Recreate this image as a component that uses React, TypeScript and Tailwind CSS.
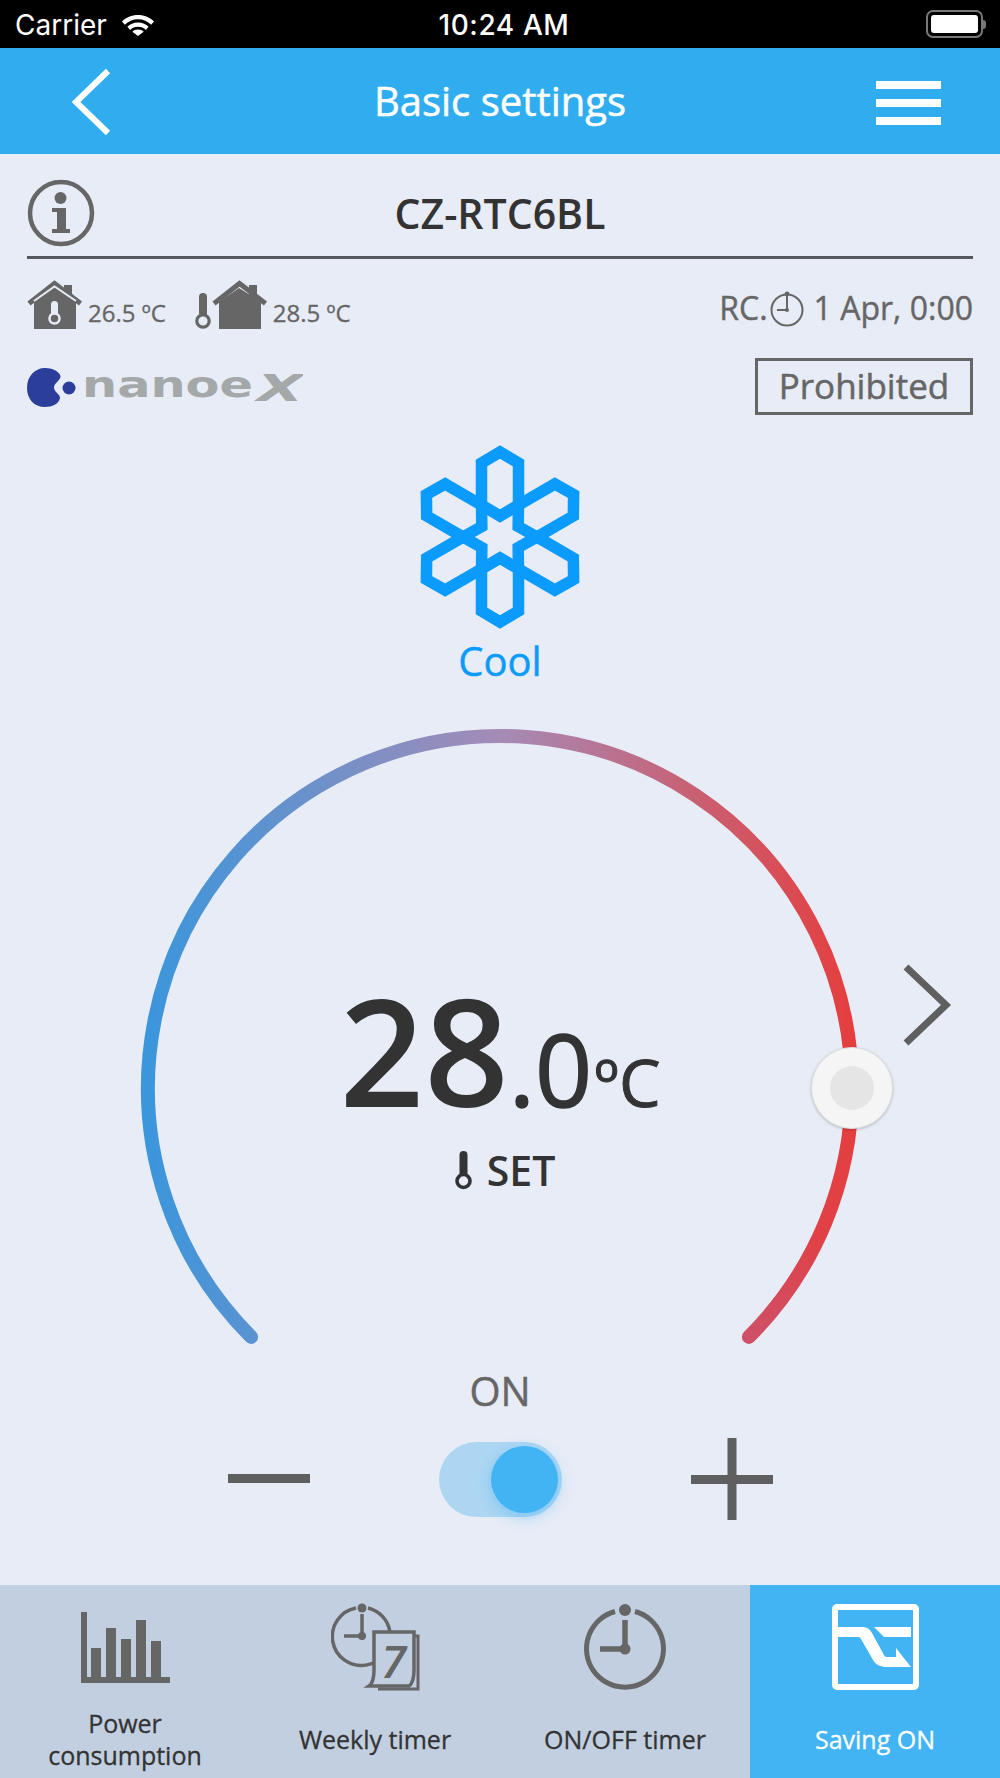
import { useState } from 'react';

const Thermometer = ({ className }: { className?: string }) => (
  <svg viewBox="0 0 17 39" className={className}>
    <rect x="4.500" y="0" width="8" height="28" rx="4" fill="currentColor" />
    <circle cx="8.500" cy="30" r="6.500" fill="#e7ecf6" stroke="currentColor" strokeWidth="3.600" />
  </svg>
);

const HouseTemp = () => (
  <svg viewBox="27 280 56 50" className="w-[56px] h-[50px] text-[#666]">
    <path d="M64 285h8v14h-8z" fill="currentColor" />
    <path d="M34 302 L54 285 L76 302 V329 H34 Z" fill="currentColor" />
    <path d="M29 303.500 L54.500 283.500 L80.500 303.500" fill="none" stroke="currentColor" strokeWidth="5" />
    <path d="M34 301 L54.500 286.500 L76 301" fill="none" stroke="#e7ecf6" strokeWidth="2" />
    <rect x="51" y="301" width="7" height="16" rx="3.500" fill="#e7ecf6" />
    <circle cx="54.500" cy="318.500" r="5" fill="#666" stroke="#e7ecf6" strokeWidth="2.500" />
  </svg>
);

const HouseOutside = () => (
  <svg viewBox="195 280 74 50" className="w-[74px] h-[50px] text-[#666]">
    <rect x="199" y="293" width="8" height="24" rx="4" fill="currentColor" />
    <circle cx="203" cy="321" r="6.200" fill="#e7ecf6" stroke="currentColor" strokeWidth="3.200" />
    <path d="M249 285h8v14h-8z" fill="currentColor" />
    <path d="M219 302 L239 288 L261 302 V329 H219 Z" fill="currentColor" />
    <path d="M214 303.500 L239.500 283.500 L265.500 303.500" fill="none" stroke="currentColor" strokeWidth="5" />
  </svg>
);

const NanoeLogo = () => (
  <svg viewBox="27 350 276 60" className="w-[276px] h-[60px]">
    <path
      d="M45 367 C54 367 61 372 60.500 376 C59 381 54 382 54 386.500 C54 391 60 393 60 397 C59 403 52 406 45 406 C34 406 27 398 27 387 C27 375 35 367 45 367 Z"
      fill="#2b3f9a"
    />
    <circle cx="69" cy="387" r="6.500" fill="#2b3f9a" />
    <text x="82" y="396" fontFamily="'DejaVu Sans', sans-serif" fontWeight="700" fontSize="36" textLength="171" lengthAdjust="spacingAndGlyphs" fill="#a5a8a8">
      nanoe
    </text>
    <text x="257" y="400" fontFamily="'DejaVu Sans', sans-serif" fontWeight="700" fontStyle="italic" fontSize="37" textLength="46" lengthAdjust="spacingAndGlyphs" fill="#a5a8a8">
      X
    </text>
  </svg>
);

// six elongated hexagon petals turned around the middle
const Snowflake = () => (
  <svg viewBox="-92 -93 184 186" className="w-[184px] h-[186px] text-[#0a9bfd]">
    {[0, 60, 120, 180, 240, 300].map((deg) => (
      <polygon
        key={deg}
        points="0,-85 18.500,-74 18.500,-32 0,-21 -18.500,-32 -18.500,-74"
        fill="none"
        stroke="currentColor"
        strokeWidth="11.500"
        transform={`rotate(${deg})`}
      />
    ))}
  </svg>
);

const Dial = () => (
  <svg viewBox="0 0 740 640" className="absolute left-[130px] top-0 w-[740px] h-[640px]">
    <defs>
      <linearGradient id="dialUpper" gradientUnits="userSpaceOnUse" x1="18" y1="0" x2="722" y2="0">
        <stop offset="0" stopColor="#3b96dc" />
        <stop offset="0.5" stopColor="#a58bb6" />
        <stop offset="1" stopColor="#e53e3e" />
      </linearGradient>
      <linearGradient id="dialLower" gradientUnits="userSpaceOnUse" x1="0" y1="367" x2="0" y2="616">
        <stop offset="0" stopColor="#e53e3e" />
        <stop offset="0.6" stopColor="#e04146" />
        <stop offset="1" stopColor="#cf5068" />
      </linearGradient>
    </defs>
    <path d="M121.100 615.900 A352 352 0 1 1 722 367" fill="none" stroke="url(#dialUpper)" strokeWidth="14" strokeLinecap="round" />
    <path d="M722 367 A352 352 0 0 1 618.900 615.900" fill="none" stroke="url(#dialLower)" strokeWidth="14" strokeLinecap="round" />
  </svg>
);

const TabLabel = ({ children, active }: { children: React.ReactNode; active?: boolean }) => (
  <div className={`flex-1 flex items-center justify-center text-center text-[25px] leading-[32px] [-webkit-text-stroke:0.3px] ${active ? 'text-white' : 'text-[#333]'}`}>
    {children}
  </div>
);

export default function App() {
  const [on, setOn] = useState(true);

  return (
    <div className="w-[1000px] h-[1778px] flex flex-col bg-[#e7ecf6] font-['Open_Sans',sans-serif] overflow-hidden">
      {/* status bar */}
      <div className="h-12 bg-black flex items-center justify-between pl-[15px] pr-[14px] relative text-white font-['Inter',sans-serif] text-[28px]">
        <div className="flex items-center gap-[14px]">
          <span className="pt-[2px]">Carrier</span>
          <svg viewBox="0 0 34 24" className="w-[34px] h-[24px]" fill="white">
            <path d="M17 3C10.500 3 5 5.500 1 9.500l2.800 3.300C7.300 9.300 11.800 7.300 17 7.300s9.700 2 13.200 5.500L33 9.500C29 5.500 23.500 3 17 3z" />
            <path d="M17 10.500c-4.500 0-8 1.700-10.600 4.200l2.800 3.200c2-2 4.700-3.200 7.800-3.200s5.800 1.200 7.800 3.200l2.800-3.200C25 12.200 21.500 10.500 17 10.500z" />
            <path d="M17 17.500c-2.400 0-4.300.9-5.700 2.200L17 24l5.700-4.300c-1.400-1.300-3.300-2.200-5.700-2.200z" />
          </svg>
        </div>
        <span className="absolute left-[8px] right-0 text-center font-medium tracking-[0.6px] pt-[2px]">10:24 AM</span>
        <div className="flex items-center">
          <div className="w-[57px] h-[28px] rounded-[7px] border-2 border-[#777] p-[3px]">
            <div className="w-full h-full rounded-[3px] bg-white" />
          </div>
          <div className="w-[3px] h-[9px] rounded-r-sm bg-[#777]" />
        </div>
      </div>

      {/* header */}
      <header className="h-[106px] bg-[#30adee] flex items-center justify-between relative pl-[70px] pr-[59px]">
        <button onClick={() => setOn(on)}>
          <svg viewBox="0 0 42 68" className="w-[42px] h-[68px] translate-y-[1px]">
            <polyline points="38,3 6,34 38,65" fill="none" stroke="white" strokeWidth="6" />
          </svg>
        </button>
        <h1 className="absolute left-0 right-0 text-center text-white text-[40px] [-webkit-text-stroke:0.5px] pointer-events-none">Basic settings</h1>
        <div className="flex flex-col gap-[10px] mt-[4px]">
          <div className="w-[65px] h-2 bg-white" />
          <div className="w-[65px] h-2 bg-white" />
          <div className="w-[65px] h-2 bg-white" />
        </div>
      </header>

      <main className="flex-1 flex flex-col relative">
        <div className="mx-[27px] h-[105px] border-b-[3px] border-[#55585c] flex items-center justify-center relative">
          <svg viewBox="0 0 68 68" className="absolute left-0 top-[25px] w-[68px] h-[68px] text-[#666]">
            <circle cx="34" cy="34" r="31" fill="none" stroke="currentColor" strokeWidth="4.500" />
            <circle cx="33.500" cy="19" r="6" fill="currentColor" />
            <path d="M25 29 H39 V50 H43 V54 H25 V50 H30 V33 H25 Z" fill="currentColor" />
          </svg>
          <h2 className="text-[41px] font-semibold text-[#333] pt-[18px]">CZ-RTC6BL</h2>
        </div>

        <div className="mx-[27px] mt-[21px] flex justify-between">
          <div className="flex flex-col">
            <div className="flex items-end h-[50px] text-[#666] text-[24px] [-webkit-text-stroke:0.3px]">
              <HouseTemp />
              <span className="ml-[5px] leading-[30px] mb-[2px]">26.5 ºC</span>
              <div className="ml-[29px]">
                <HouseOutside />
              </div>
              <span className="ml-[4px] leading-[30px] mb-[2px]">28.5 ºC</span>
            </div>
            <div className="mt-[21px]">
              <NanoeLogo />
            </div>
          </div>
          <div className="flex flex-col items-end text-[#666]">
            <div className="flex items-center h-[50px] text-[32px] [-webkit-text-stroke:0.4px] pt-[6px]">
              <span>RC.</span>
              <svg viewBox="0 0 34 36" className="w-[34px] h-[36px] ml-[2px] mr-[10px] mt-[2px]">
                <circle cx="17" cy="19" r="15.500" fill="none" stroke="#666" strokeWidth="2" />
                <circle cx="17" cy="3" r="2.400" fill="#666" />
                <path d="M17 5V19H7" fill="none" stroke="#666" strokeWidth="2" />
                <circle cx="17" cy="19" r="2" fill="#666" />
              </svg>
              <span>1 Apr, 0:00</span>
            </div>
            <div className="mt-[28px] w-[218px] h-[57px] border-[3px] border-[#666] flex items-center justify-center text-[35px] [-webkit-text-stroke:0.5px]">
              Prohibited
            </div>
          </div>
        </div>

        <div className="flex flex-col items-center mt-[29px]">
          <Snowflake />
          <span className="text-[40px] [-webkit-text-stroke:0.4px] text-[#0a9bfd] leading-[48px] mt-[7px]">Cool</span>
        </div>

        {/* temperature dial */}
        <section className="relative h-[640px] mt-[36px] flex flex-col items-center">
          <Dial />
          <div className="relative flex items-baseline text-[#333] leading-none mt-[255px]">
            <span className="text-[148px] font-semibold leading-none">28</span>
            <span className="text-[100px] [-webkit-text-stroke:1.5px] leading-none">.0</span>
            <span className="text-[66px] [-webkit-text-stroke:1px] leading-none ml-[2px]">ºC</span>
          </div>
          <div className="relative flex items-center text-[#333] text-[41px] font-semibold leading-none mt-[26px] ml-[10px]">
            <Thermometer className="w-[17px] h-[39px] mr-[15px]" />
            SET
          </div>
          {/* thumb sits on the arc */}
          <div className="absolute left-[811px] top-[326px] w-[82px] h-[82px] rounded-full bg-[#f5f5f5] border border-[#dcdcdc] shadow-[0_1px_3px_rgba(0,0,0,0.2)] flex items-center justify-center">
            <div className="w-[44px] h-[44px] rounded-full bg-[#e5e5e5]" />
          </div>
          <svg viewBox="0 0 50 82" className="absolute left-[902px] top-[243px] w-[50px] h-[82px]">
            <polyline points="4,3 44,41 4,79" fill="none" stroke="#5f5f5f" strokeWidth="7" />
          </svg>
        </section>

        <div className="flex flex-col items-center mt-[4px]">
          <span className="text-[40px] [-webkit-text-stroke:0.4px] text-[#666] leading-[52px]">ON</span>
          <div className="w-[545px] flex items-center justify-between mt-[21px]">
            <div className="w-[82px] h-[9px] bg-[#5f5f5f] -mt-[1px]" />
            <button onClick={() => setOn(!on)} className="w-[123px] h-[75px] rounded-full bg-[#add6f3] flex items-center justify-end pr-[4px]">
              <div className="w-[67px] h-[67px] rounded-full bg-[#42b4f4] shadow-[0_4px_14px_rgba(66,180,244,0.45)]" />
            </button>
            <svg viewBox="0 0 82 82" className="w-[82px] h-[82px]">
              <path d="M0 37h82v9H0zM36.500 0h9v82h-9z" fill="#5f5f5f" />
            </svg>
          </div>
        </div>
      </main>

      {/* bottom tabs */}
      <nav className="h-[193px] grid grid-cols-4 bg-[#c2cfe0]">
        <div className="flex flex-col items-center">
          <div className="h-[115px]">
            <svg viewBox="81 1612 89 71" className="w-[89px] h-[71px] mt-[27px]" fill="#666">
              <path d="M81 1612h6v65h83v6H81z" />
              <path d="M91 1648h10v30H91zM106 1628h10v50h-10zM121 1639h10v39h-10zM136 1620h10v58h-10zM151 1641h10v37h-10z" />
            </svg>
          </div>
          <TabLabel>
            <span>
              Power
              <br />
              consumption
            </span>
          </TabLabel>
        </div>
        <div className="flex flex-col items-center">
          <div className="h-[115px]">
            <svg viewBox="330 1602 90 90" className="w-[90px] h-[90px] mt-[17px] ml-[1px]" fill="none" stroke="#666">
              <path d="M355 1608 A29 29 0 1 0 389 1632 M367 1608 A29 29 0 0 1 389 1632" strokeWidth="3.500" />
              <circle cx="361" cy="1608" r="4.500" fill="#666" stroke="none" />
              <path d="M361 1614V1636H343" strokeWidth="3.500" />
              <circle cx="361" cy="1636" r="4" fill="#666" stroke="none" />
              <path d="M413 1636 H417 V1689 H377" strokeWidth="3" />
              <path d="M373 1632 H413 V1670 C413 1678 411 1684 408 1686 H368 C371 1684 373 1678 373 1670 Z" fill="#c2cfe0" strokeWidth="3.500" />
              <text x="380" y="1678" fontFamily="'Open Sans', sans-serif" fontSize="46" fontStyle="italic" fontWeight="600" fill="#666" stroke="none">7</text>
            </svg>
          </div>
          <TabLabel>Weekly timer</TabLabel>
        </div>
        <div className="flex flex-col items-center">
          <div className="h-[115px]">
            <svg viewBox="580 1602 90 92" className="w-[90px] h-[92px] mt-[17px]" fill="none" stroke="#666">
              <path d="M615 1611.500 A38.500 38.500 0 1 0 635 1611.500" strokeWidth="5" />
              <circle cx="625" cy="1610" r="6" fill="#666" stroke="none" />
              <path d="M625 1620V1649M600 1649H625" strokeWidth="5.500" />
              <circle cx="625" cy="1649" r="5.500" fill="#666" stroke="none" />
            </svg>
          </div>
          <TabLabel>ON/OFF timer</TabLabel>
        </div>
        <div className="flex flex-col items-center bg-[#42b4f4]">
          <div className="h-[115px]">
            <svg viewBox="828 1602 92 92" className="w-[92px] h-[92px] mt-[17px]" fill="white">
              <rect x="834" y="1607" width="81" height="80" rx="2" fill="none" stroke="white" strokeWidth="6" />
              <path d="M837 1627H862C866 1627 869 1629 871 1633L883 1655C884 1657 885 1657 887 1657H895V1648L910 1667H885C880 1667 875 1665 872 1660L860 1639C859 1637 858 1637 856 1637H837Z" />
              <path d="M873 1627H910V1637H883Z" />
            </svg>
          </div>
          <TabLabel active>Saving ON</TabLabel>
        </div>
      </nav>
    </div>
  );
}
